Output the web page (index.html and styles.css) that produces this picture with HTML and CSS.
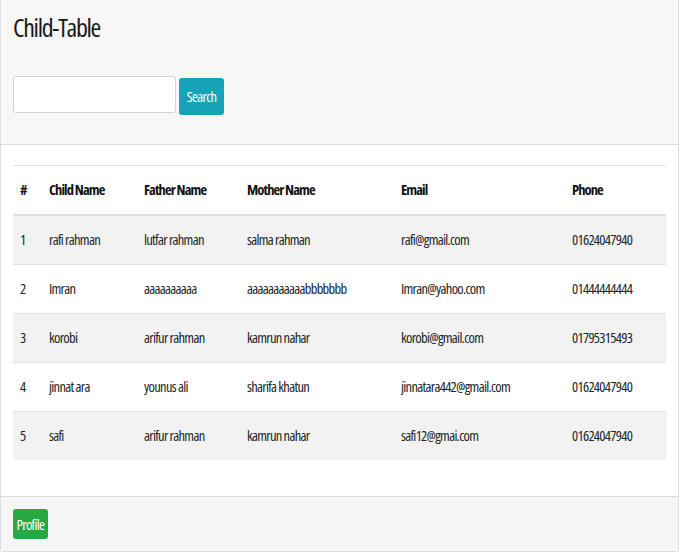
FILE: index.html
```html
<!DOCTYPE html>
<html>
<head>
<meta charset="utf-8">
<title>Child-Table</title>
<link rel="stylesheet" href="styles.css">
</head>
<body>
<div class="card">
  <div class="card-header">
    <h2 class="title">Child-Table</h2>
    <form class="search">
      <input class="search-input" type="text">
      <button class="btn btn-info" type="button">Search</button>
    </form>
  </div>
  <div class="card-body">
    <table class="table">
      <colgroup>
        <col class="c1"><col class="c2"><col class="c3"><col class="c4"><col class="c5"><col class="c6">
      </colgroup>
      <thead>
        <tr><th>#</th><th>Child Name</th><th>Father Name</th><th>Mother Name</th><th>Email</th><th>Phone</th></tr>
      </thead>
      <tbody>
        <tr><td>1</td><td>rafi rahman</td><td>lutfar rahman</td><td>salma rahman</td><td>rafi@gmail.com</td><td>01624047940</td></tr>
        <tr><td>2</td><td>Imran</td><td>aaaaaaaaaa</td><td>aaaaaaaaaaabbbbbbb</td><td>Imran@yahoo.com</td><td>01444444444</td></tr>
        <tr><td>3</td><td>korobi</td><td>arifur rahman</td><td>kamrun nahar</td><td>korobi@gmail.com</td><td>01795315493</td></tr>
        <tr><td>4</td><td>jinnat ara</td><td>younus ali</td><td>sharifa khatun</td><td>jinnatara442@gmail.com</td><td>01624047940</td></tr>
        <tr><td>5</td><td>safi</td><td>arifur rahman</td><td>kamrun nahar</td><td>safi12@gmai.com</td><td>01624047940</td></tr>
      </tbody>
    </table>
  </div>
  <div class="card-footer">
    <button class="btn btn-success" type="button">Profile</button>
  </div>
</div>
</body>
</html>
```
FILE: styles.css
```css
html, body {
  margin: 0;
  padding: 0;
  background: #ffffff;
}
body {
  font-family: "Open Sans", "Noto Sans", sans-serif;
  font-stretch: 75%;
  font-size: 14.5px;
  letter-spacing: -0.7px;
  color: #212529;
}
.card {
  width: 677px;
  border: 1px solid #dcdcdc;
  border-top: none;
  border-radius: 0 0 3px 3px;
  background: #ffffff;
}
.card-header {
  background: #f7f7f7;
  padding: 12px 12px 29px 12px;
  border-bottom: 1px solid #dcdcdc;
}
.title {
  margin: 0 0 33px 0;
  font-size: 26px;
  line-height: 31px;
  font-weight: 400;
  letter-spacing: -1.3px;
  color: #1a1a1a;
}
.search {
  display: flex;
  align-items: flex-start;
  gap: 3px;
  margin: 0;
}
.search-input {
  box-sizing: border-box;
  width: 163px;
  height: 37px;
  border: 1px solid #ced4da;
  border-radius: 3px;
  background: #ffffff;
  margin: 0;
  padding: 0 8px;
}
.btn {
  box-sizing: border-box;
  border: none;
  border-radius: 3px;
  color: #ffffff;
  font-family: inherit;
  font-stretch: 75%;
  font-size: 14.5px;
  letter-spacing: -0.7px;
  margin: 0;
  padding: 0;
  cursor: pointer;
}
.btn-info {
  background: #17a2b8;
  width: 45px;
  height: 37px;
  margin-top: 2px;
}
.btn-success {
  background: #28a745;
  width: 35px;
  height: 30px;
  display: block;
}
.card-body {
  padding: 20px 12px;
}
.table {
  width: 100%;
  border-collapse: collapse;
  table-layout: fixed;
  margin-bottom: 16px;
}
.c1 { width: 29px; }
.c2 { width: 95px; }
.c3 { width: 103px; }
.c4 { width: 154px; }
.c5 { width: 171px; }
.c6 { width: 101px; }
.table th,
.table td {
  text-align: left;
  padding: 12px 4px 12px 7px;
  line-height: 24px;
  border-top: 1px solid #dee2e6;
  white-space: nowrap;
  overflow: hidden;
}
.table th {
  font-weight: 700;
  letter-spacing: -0.9px;
  color: #111111;
}
.table thead th {
  border-bottom: 2px solid #dee2e6;
}
.table tbody tr:nth-child(odd) {
  background: #f2f2f2;
}
.card-footer {
  background: #f5f5f5;
  padding: 12px;
  border-top: 1px solid #dcdcdc;
}
```
